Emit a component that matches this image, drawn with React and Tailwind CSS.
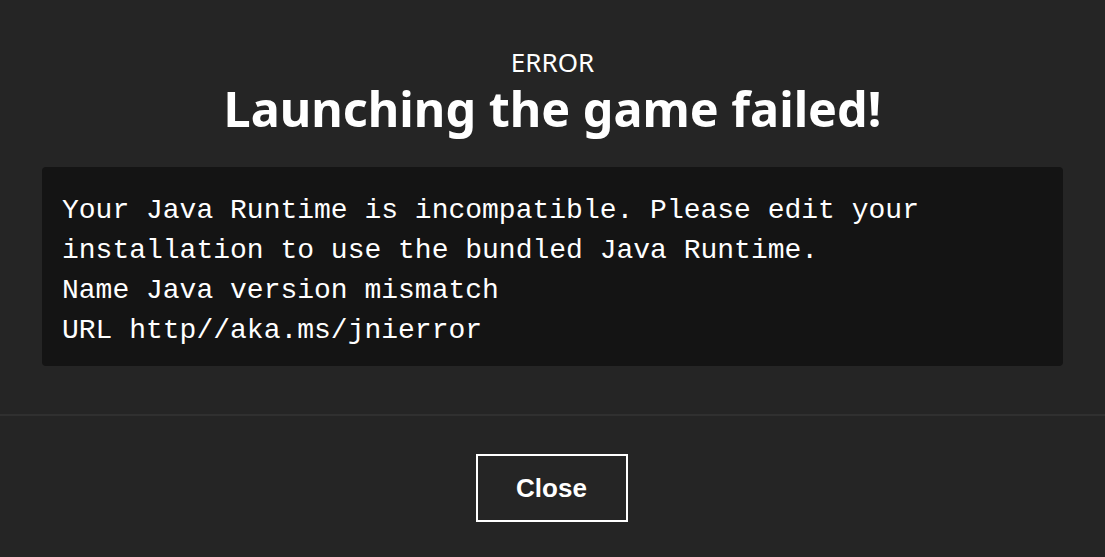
import React from "react";

const lines = [
  "Your Java Runtime is incompatible. Please edit your",
  "installation to use the bundled Java Runtime.",
  "Name Java version mismatch",
  "URL http//aka.ms/jnierror",
];

const App = () => {
  return (
    <div className="w-[1105px] h-[557px] bg-[#252525] text-white flex flex-col overflow-hidden">
      <div className="flex flex-col items-center pt-[47px] px-[42px] pb-[48px]">
        <p className="font-['Noto_Sans',sans-serif] text-[26px] leading-[30px]">ERROR</p>
        <h1 className="font-['Noto_Sans',sans-serif] font-bold text-[48.5px] leading-[60px] mt-[1px]">
          Launching the game failed!
        </h1>
        <div className="self-stretch mt-[29px] bg-[#141414] rounded-[4px] px-[20px] pt-[24px] pb-[15px]">
          {lines.map((line) => (
            <p
              key={line}
              className="font-['Liberation_Mono',monospace] text-[28px] leading-[40px] whitespace-pre"
            >
              {line}
            </p>
          ))}
        </div>
      </div>
      <div className="border-t-2 border-[#303030] flex justify-center pt-[38px]">
        <button className="w-[152px] h-[68px] mr-[2px] border-2 border-white font-['Liberation_Sans',sans-serif] font-bold text-[26px]">
          Close
        </button>
      </div>
    </div>
  );
};

export default App;
